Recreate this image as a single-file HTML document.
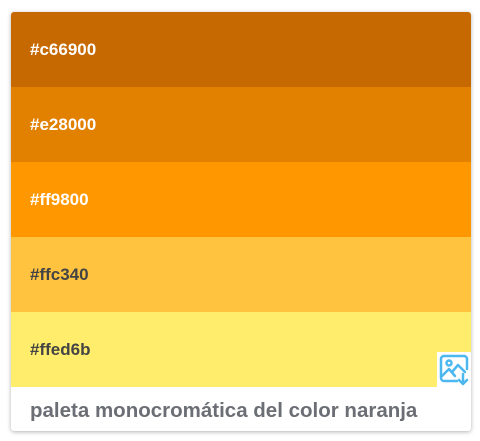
<!DOCTYPE html>
<html><head><style>
body{margin:0;width:480px;height:441px;background:#fff;font-family:"Liberation Sans",sans-serif;}
.card{position:absolute;left:11px;top:12px;width:460px;height:419px;border-radius:3px;overflow:hidden;box-shadow:0 1px 4px rgba(0,0,0,.3);background:#fff}
.s{height:75px;line-height:75px;padding-left:19px;font-weight:bold;font-size:17px}
.cap{position:absolute;top:375px;left:19px;line-height:47px;font-weight:bold;font-size:20.5px;color:#6b6e74}
.ic{position:absolute;left:426px;top:340px;width:35px;height:35px;background:#fff}
</style></head><body>
<div class="card">
<div class="s" style="background:#c66900;color:#fff">#c66900</div>
<div class="s" style="background:#e28000;color:#fff">#e28000</div>
<div class="s" style="background:#ff9800;color:#fff">#ff9800</div>
<div class="s" style="background:#ffc340;color:#444">#ffc340</div>
<div class="s" style="background:#ffed6b;color:#444">#ffed6b</div>
<div class="ic"><svg width="35" height="35" viewBox="0 0 35 35" fill="none" stroke="#4db8f0" stroke-width="2.5" stroke-linecap="round" stroke-linejoin="round">
<path d="M20 29H7a3 3 0 0 1-3-3V7a3 3 0 0 1 3-3h20a3 3 0 0 1 3 3v10"/>
<circle cx="12" cy="11" r="2.5"/>
<path d="M5 24l7-7 6 7M15 20l6-7 7 7"/>
<path d="M26 22v10M22 28l4 4 4-4"/>
</svg></div>
<div class="cap">paleta monocromática del color naranja</div>
</div>
</body></html>
